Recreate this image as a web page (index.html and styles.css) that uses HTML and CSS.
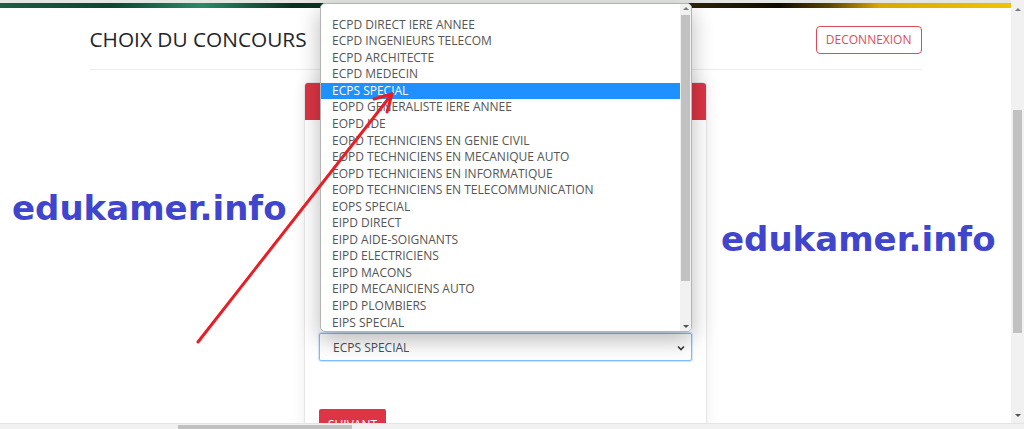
FILE: index.html
```html
<!DOCTYPE html>
<html lang="fr">
<head>
    <meta charset="UTF-8">
    <meta name="viewport" content="width=device-width, initial-scale=1.0">
    <title>Choix du concours</title>
    <link rel="stylesheet" href="styles.css">
</head>
<body>
    <div class="window">
        <div class="page">
            <div class="topbar"></div>

            <header class="container header">
                <h1 class="title">CHOIX DU CONCOURS</h1>
                <a href="#" class="btn-logout">DECONNEXION</a>
            </header>

            <main class="container main">
                <div class="card">
                    <div class="card-header"></div>
                    <div class="card-body">
                        <p class="card-intro">Veuillez choisir le concours auquel vous souhaitez postuler.</p>
                        <label class="form-label">Concours</label>
                        <div class="select-box">
                            <span>ECPS SPECIAL</span>
                            <svg class="chevron" width="10" height="10" viewBox="0 0 10 10">
                                <path d="M2 3.5 L5 6.5 L8 3.5" fill="none" stroke="#343a40" stroke-width="1.6"/>
                            </svg>
                        </div>
                        <button type="button" class="btn-next">SUIVANT</button>
                    </div>
                </div>
            </main>

            <!-- liste deroulante ouverte -->
            <div class="dropdown">
                <ul class="dropdown-list">
                    <li>ECPD DIRECT IERE ANNEE</li>
                    <li>ECPD INGENIEURS TELECOM</li>
                    <li>ECPD ARCHITECTE</li>
                    <li>ECPD MEDECIN</li>
                    <li class="active">ECPS SPECIAL</li>
                    <li>EOPD GENERALISTE IERE ANNEE</li>
                    <li>EOPD IDE</li>
                    <li>EOPD TECHNICIENS EN GENIE CIVIL</li>
                    <li>EOPD TECHNICIENS EN MECANIQUE AUTO</li>
                    <li>EOPD TECHNICIENS EN INFORMATIQUE</li>
                    <li>EOPD TECHNICIENS EN TELECOMMUNICATION</li>
                    <li>EOPS SPECIAL</li>
                    <li>EIPD DIRECT</li>
                    <li>EIPD AIDE-SOIGNANTS</li>
                    <li>EIPD ELECTRICIENS</li>
                    <li>EIPD MACONS</li>
                    <li>EIPD MECANICIENS AUTO</li>
                    <li>EIPD PLOMBIERS</li>
                    <li>EIPS SPECIAL</li>
                </ul>
                <div class="dropdown-scroll">
                    <span class="arrow-up"></span>
                    <div class="dropdown-thumb"></div>
                    <span class="arrow-down"></span>
                </div>
            </div>

            <span class="watermark watermark-left">edukamer.info</span>
            <span class="watermark watermark-right">edukamer.info</span>

            <svg class="pointer" width="1011" height="429" viewBox="0 0 1011 429">
                <g stroke="#ea1c24" stroke-width="3" stroke-linecap="round" fill="none">
                    <line x1="198" y1="342" x2="392" y2="94"/>
                    <line x1="392" y1="94" x2="374" y2="99"/>
                    <line x1="392" y1="94" x2="387" y2="112"/>
                </g>
            </svg>
        </div>

        <div class="vscroll">
            <span class="arrow-up"></span>
            <div class="vscroll-track"><div class="vscroll-thumb"></div></div>
            <span class="arrow-down"></span>
        </div>
    </div>
    <div class="hscroll"><div class="hscroll-thumb"></div></div>
</body>
</html>
```

FILE: styles.css
```css
:root {
    --background: #ffffff;
    --foreground: #212529;
    --primary: #dc3545;
    --muted: #555555;
    --border: #e6e6e6;
    --focus: #80bdff;
    --highlight: #1e90ff;
    --watermark: #3f45cc;
    --scroll-track: #f1f1f1;
    --scroll-thumb: #c1c1c1;
}

* {
    margin: 0;
    padding: 0;
    box-sizing: border-box;
}

html, body {
    height: 100%;
    overflow: hidden;
}

body {
    font-family: 'Open Sans', 'Noto Sans', sans-serif;
    color: var(--foreground);
    background-color: var(--background);
    display: flex;
    flex-direction: column;
}

.window {
    display: flex;
    flex: 1;
    min-height: 0;
}

.page {
    position: relative;
    flex: 1;
    overflow: hidden;
}

.topbar {
    height: 8px;
    border-top: 3px solid #e4e6e4;
    background: linear-gradient(90deg, #1d5c45 0%, #0d4530 11%, #2a8a66 20%, #0a2f20 29%, #0b3a28 40%, #1b2a10 60%, #2f2606 68%, #0e0a00 77%, #5a4300 82%, #d9a800 87%, #f2c200 100%);
}

.container {
    width: 832px;
    margin: 0 auto;
}

.header {
    height: 62px;
    display: flex;
    justify-content: space-between;
    align-items: center;
    border-bottom: 1px solid #ececec;
}

.title {
    font-size: 20.8px;
    font-weight: 500;
}

.btn-logout {
    display: flex;
    align-items: center;
    height: 28px;
    padding: 0 9px;
    font-size: 12px;
    color: #e04b59;
    text-decoration: none;
    border: 1px solid #e04b59;
    border-radius: 4px;
    margin-top: 2px;
}

.main {
    padding-top: 12px;
}

.card {
    width: 403px;
    margin: 0 auto;
    height: 400px;
    border: 1px solid var(--border);
    border-radius: 4px;
    box-shadow: 0 0 16px rgba(0, 0, 0, 0.07);
}

.card-header {
    height: 37px;
    background-color: var(--primary);
    border-radius: 3px 3px 0 0;
}

.card-body {
    padding: 14px 14px 14px 14px;
}

.card-intro {
    min-height: 175px;
    font-size: 13px;
    color: var(--muted);
    padding-left: 8px;
}

.form-label {
    display: block;
    font-size: 13px;
    line-height: 20px;
    margin-bottom: 4px;
    padding-left: 8px;
}

.select-box {
    height: 28px;
    display: flex;
    align-items: center;
    justify-content: space-between;
    padding: 0 5px 0 13px;
    font-size: 12px;
    color: #495057;
    border: 1px solid var(--focus);
    border-radius: 2px;
    box-shadow: 0 0 0 1px rgba(128, 189, 255, 0.35);
}

.chevron {
    margin-top: 1px;
}

.btn-next {
    margin-top: 48px;
    height: 30px;
    padding: 0 9px;
    font-family: inherit;
    font-size: 12px;
    color: #fff;
    background-color: var(--primary);
    border: none;
    border-radius: 2px;
}

.dropdown {
    position: absolute;
    left: 320px;
    top: 3px;
    width: 372px;
    height: 329px;
    display: flex;
    background-color: var(--background);
    border: 1px solid #b4b4b4;
    border-radius: 5px;
    box-shadow: 0 8px 22px rgba(0, 0, 0, 0.28);
    overflow: hidden;
}

.dropdown-list {
    flex: 1;
    list-style: none;
    padding-top: 12.7px;
}

.dropdown-list li {
    height: 16.56px;
    line-height: 16.56px;
    padding-left: 11px;
    font-size: 12px;
    color: var(--muted);
    white-space: nowrap;
}

.dropdown-list li.active {
    background-color: var(--highlight);
    color: #fff;
}

.dropdown-scroll {
    width: 11px;
    display: flex;
    flex-direction: column;
    align-items: center;
    background-color: var(--scroll-track);
    padding: 3px 0;
}

.dropdown-thumb {
    width: 9px;
    height: 266px;
    margin: 5px 0 auto;
    background-color: var(--scroll-thumb);
}

.arrow-up,
.arrow-down {
    width: 0;
    height: 0;
    border-left: 3px solid transparent;
    border-right: 3px solid transparent;
}

.arrow-up {
    border-bottom: 3px solid #7a7a7a;
}

.arrow-down {
    border-top: 3px solid #505050;
}

.watermark {
    position: absolute;
    font-family: 'DejaVu Sans', Verdana, sans-serif;
    font-weight: 700;
    font-size: 34px;
    line-height: 34px;
    color: var(--watermark);
    white-space: nowrap;
}

.watermark-left {
    left: 12px;
    top: 191px;
}

.watermark-right {
    left: 721px;
    top: 222px;
}

.pointer {
    position: absolute;
    left: 0;
    top: 0;
    pointer-events: none;
}

.vscroll {
    width: 13px;
    display: flex;
    flex-direction: column;
    align-items: center;
    background-color: var(--scroll-track);
    padding: 8px 0 6px;
}

.vscroll-track {
    flex: 1;
    width: 100%;
    padding: 99px 2px 0;
}

.vscroll-thumb {
    height: 223px;
    background-color: var(--scroll-thumb);
}

.hscroll {
    height: 6px;
    border-top: 1px solid #e4e4e4;
    background-color: var(--scroll-track);
    padding-left: 178px;
}

.hscroll-thumb {
    width: 174px;
    height: 100%;
    margin-top: 1px;
    background-color: var(--scroll-thumb);
}
```
